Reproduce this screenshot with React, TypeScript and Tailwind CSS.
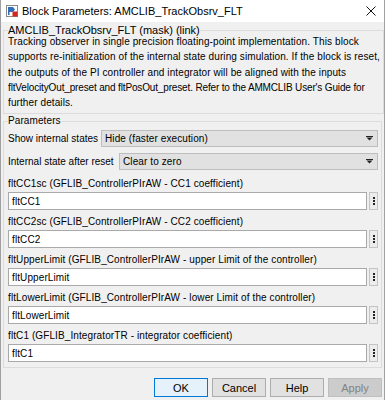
import React from "react";

function ParamEdit({ label, value }: { label: string; value: string }) {
  return (
    <div className="flex flex-col">
      <div className="h-[16px] leading-[16px] whitespace-nowrap">{label}</div>
      <div className="flex items-center h-[18px]">
        <div className="flex-1 h-[18px] bg-white border border-[#a9a9a9] flex items-center pl-[3px] whitespace-nowrap">
          {value}
        </div>
        <div className="ml-[2px] w-[9px] h-[18px] bg-[#ececec] border border-[#c4c4c4] flex flex-col items-center justify-center gap-[1px]">
          <div className="w-[2px] h-[2px] bg-[#222]" />
          <div className="w-[2px] h-[2px] bg-[#222]" />
          <div className="w-[2px] h-[2px] bg-[#222]" />
        </div>
      </div>
    </div>
  );
}

function Combo({ label, value, left }: { label: string; value: string; left: string }) {
  return (
    <div className="flex items-center h-[17px]">
      <div className={"whitespace-nowrap tracking-normal " + left}>{label}</div>
      <div className="flex-1 h-[17px] bg-[#e1e1e1] border border-[#bdbdbd] flex items-center pl-[3px] pr-[4px]">
        <span className="whitespace-nowrap">{value}</span>
        <svg className="ml-auto" width="7" height="5" viewBox="0 0 7 5">
          <rect x="0" y="0" width="7" height="1" fill="#222" />
          <path d="M0.5 1.5 L6.5 1.5 L3.5 4.5 Z" fill="#222" />
        </svg>
      </div>
    </div>
  );
}

function Btn({ children, variant }: { children: React.ReactNode; variant?: "default" | "disabled" }) {
  const cls =
    variant === "default"
      ? "bg-[#e5f1fb] border-[#0078d7] text-black"
      : variant === "disabled"
      ? "bg-[#cccccc] border-[#bfbfbf] text-[#838383]"
      : "bg-[#e1e1e1] border-[#adadad] text-black";
  return (
    <div className={"w-[54px] h-[19px] border flex items-center justify-center text-[11px] tracking-normal " + cls}>
      {children}
    </div>
  );
}

export default function App() {
  return (
    <div className="w-[385px] h-[400px] overflow-hidden bg-[#f0f0f0] border-l border-r border-[#a0a0a0] flex flex-col text-[10px] tracking-[0.1px] text-black font-['Liberation_Sans',sans-serif]">
      {/* title bar */}
      <div className="h-[22px] bg-white flex items-center pl-[5px] pr-[8px] shrink-0 tracking-normal">
        <svg width="12" height="12" viewBox="0 0 12 12">
          <rect x="0.5" y="0.5" width="11" height="11" fill="#fff" stroke="#8a8a8a" />
          <path d="M2 2 L7 2 L9 4.5 L7 7 L2 7 Z" fill="#2f6fb8" />
          <rect x="2" y="2" width="1.5" height="8" fill="#2f6fb8" />
          <rect x="6.5" y="6.5" width="5" height="5" fill="#d6241f" />
        </svg>
        <span className="ml-[4px] text-[11px] leading-[14px] whitespace-nowrap">Block Parameters: AMCLIB_TrackObsrv_FLT</span>
        <svg className="ml-auto" width="10" height="10" viewBox="0 0 10 10">
          <path d="M0.5 0.5 L9.5 9.5 M9.5 0.5 L0.5 9.5" stroke="#111" strokeWidth="1" />
        </svg>
      </div>

      <div className="flex flex-col px-[2px]">
        <fieldset className="mt-[1px] border border-[#dcdcdc] pl-[4px] pr-[3px] pb-[3px]">
          <legend className="text-[11px] tracking-normal leading-[14px] whitespace-nowrap">AMCLIB_TrackObsrv_FLT (mask) (link)</legend>
          <div className="-mt-[3px] leading-[15.25px] whitespace-nowrap">
            Tracking observer in single precision floating-point implementation. This block
            <br />
            supports re-initialization of the internal state during simulation. If the block is reset,
            <br />
            the outputs of the PI controller and integrator will be aligned with the inputs
            <br />
            <span className="tracking-[-0.15px]">fltVelocityOut_preset and fltPosOut_preset. Refer to the AMMCLIB User's Guide for</span>
            <br />
            further details.
          </div>
        </fieldset>

        <fieldset className="mt-[0px] border border-[#dcdcdc] pl-[4px] pr-[3px] pb-[5px]">
          <legend className="leading-[14px] whitespace-nowrap">Parameters</legend>
          <div className="mt-[2px] flex flex-col gap-[6px]">
            <Combo label="Show internal states" value="Hide (faster execution)" left="w-[93px]" />
            <Combo label="Internal state after reset" value="Clear to zero" left="w-[111px]" />
          </div>
          <div className="mt-[6px] flex flex-col gap-[4px]">
            <ParamEdit label="fltCC1sc (GFLIB_ControllerPIrAW - CC1 coefficient)" value="fltCC1" />
            <ParamEdit label="fltCC2sc (GFLIB_ControllerPIrAW - CC2 coefficient)" value="fltCC2" />
            <ParamEdit label="fltUpperLimit (GFLIB_ControllerPIrAW - upper Limit of the controller)" value="fltUpperLimit" />
            <ParamEdit label="fltLowerLimit (GFLIB_ControllerPIrAW - lower Limit of the controller)" value="fltLowerLimit" />
            <ParamEdit label="fltC1 (GFLIB_IntegratorTR - integrator coefficient)" value="fltC1" />
          </div>
        </fieldset>

        <div className="mt-[10px] flex justify-end gap-[4px] pr-[0px]">
          <Btn variant="default">OK</Btn>
          <Btn>Cancel</Btn>
          <Btn>Help</Btn>
          <Btn variant="disabled">Apply</Btn>
        </div>
      </div>
    </div>
  );
}
